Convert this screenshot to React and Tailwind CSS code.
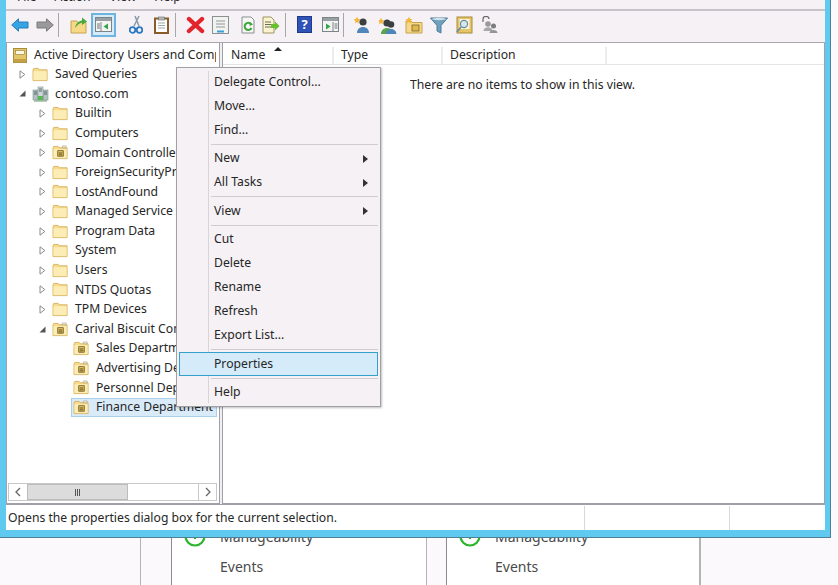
import React from "react";

const Folder = ({ ou, w = 18 }) => (
  <svg width={w} height={w - 2} viewBox="0 0 18 16" className="shrink-0">
    <path d="M1 3.5 L1.8 1.5 H6.5 L7.5 3 H16 V14.5 H1 Z" fill="#f7dc8e" stroke="#d9b25e" />
    <rect x="1.5" y="4.5" width="14" height="9.5" fill="#fcecb6" />
    {ou && <path d="M6 6 H12 V12 H6 Z" fill="#e9c767" stroke="#7d6a2c" />}
    {ou && <path d="M7 8.5 H11 M7 10.5 H11" stroke="#5a4a16" strokeWidth="1" />}
    {ou && <path d="M11 1 H15 V3 H11 Z" fill="#f4f1e6" stroke="#a89a6a" strokeWidth=".6" />}
  </svg>
);

const Collapsed = () => (
  <svg width="7" height="9" viewBox="0 0 7 9" className="shrink-0">
    <path d="M1 .8 L5.8 4.5 L1 8.2 Z" fill="#fff" stroke="#8a8a8a" />
  </svg>
);
const Expanded = () => (
  <svg width="7" height="7" viewBox="0 0 7 7" className="shrink-0">
    <path d="M6.5 .5 V6.5 H.5 Z" fill="#555" />
  </svg>
);
const Domain = () => (
  <svg width="17" height="16" viewBox="0 0 17 16" className="shrink-0">
    <rect x="1" y="4" width="5" height="10" fill="#b3c0c0" stroke="#7f8f8f" strokeWidth=".6" />
    <rect x="11" y="4" width="5" height="10" fill="#b3c0c0" stroke="#7f8f8f" strokeWidth=".6" />
    <rect x="6" y="1" width="5" height="13" fill="#cfd9d9" stroke="#7f8f8f" strokeWidth=".6" />
    <path d="M7 3 H10 M7 5 H10 M2 6 H5 M12 6 H15 M2 8 H5 M12 8 H15" stroke="#54666a" />
    <rect x="6" y="10" width="5" height="4" fill="#58b558" />
    <path d="M2 15 H15" stroke="#6a9a6a" />
  </svg>
);
const Snapin = () => (
  <svg width="14" height="15" viewBox="0 0 14 15" className="shrink-0">
    <rect x=".5" y=".5" width="13" height="14" fill="#e4c568" stroke="#a98b3a" />
    <rect x="2.5" y="2.5" width="9" height="4" fill="#fbf6dc" stroke="#8a7a42" strokeWidth=".6" />
    <rect x=".5" y="11" width="13" height="3.5" fill="#c39f47" />
  </svg>
);

const Arrow = ({ dir, color, stroke }) => (
  <svg width="18" height="14" viewBox="0 0 18 14" className="shrink-0">
    <path
      d={dir === "l" ? "M.7 7 L7.5 .8 V4 H17 V10 H7.5 V13.2 Z" : "M17.3 7 L10.5 .8 V4 H1 V10 H10.5 V13.2 Z"}
      fill={color}
      stroke={stroke}
    />
  </svg>
);

const Sep = ({ cls }) => <div className={`w-px h-[24px] bg-[#a6a6ac] shrink-0 ${cls}`} />;

const Doc = ({ children, fill = "#f6f6f2", stroke = "#8a8f93" }) => (
  <svg width="18" height="18" viewBox="0 0 18 18" className="shrink-0">
    <path d="M3 1 H12 L15 4 V17 H3 Z" fill={fill} stroke={stroke} />
    {children}
  </svg>
);

const Person = ({ x = 0, c = "#4f85b8", star }) => (
  <g transform={`translate(${x} 0)`}>
    <circle cx="10" cy="6" r="3.6" fill="#3b3f42" />
    <path d="M4 17 C4 9 16 9 16 17 Z" fill={c} />
    {star && <path d="M4 .5 L5 3 L7.5 3.5 L5.5 5 L6 7.5 L4 6 L2 7.5 L2.5 5 L.5 3.5 L3 3 Z" fill="#f2b431" />}
  </g>
);

const Toolbar = () => (
  <div className="h-[27px] pb-[4px] flex items-center bg-[#f5f1f5] border-b border-[#a8a8ae] box-content">
    <div className="ml-[5px]"><Arrow dir="l" color="#35a4e4" stroke="#2a7fb8" /></div>
    <div className="ml-[7px]"><Arrow dir="r" color="#9a9a9a" stroke="#7a7a7a" /></div>
    <Sep cls="ml-[4px]" />
    <div className="ml-[11px]">
      <svg width="18" height="18" viewBox="0 0 18 18" className="shrink-0">
        <path d="M1 5 H7 L8 6.5 H16 V17 H1 Z" fill="#f5d987" stroke="#c9a24d" />
        <path d="M5 12 C6 7 9 5 12 4.5 V1.5 L17 5.5 L12 9 V6.5 C10 7 7 9 5 12 Z" fill="#48a93f" />
      </svg>
    </div>
    <div className="ml-[3px] w-[25px] h-[24px] flex items-center justify-center bg-[#d5ebf9] border-2 border-[#6fb4de]">
      <svg width="17" height="15" viewBox="0 0 17 15">
        <rect x=".5" y=".5" width="16" height="14" fill="#f4f4f2" stroke="#7c8488" />
        <rect x="1" y="1" width="15" height="3" fill="#98a0a6" />
        <path d="M6 5 V14" stroke="#7c8488" />
        <path d="M2 7 H5 M2 9 H5 M2 11 H5" stroke="#6c7478" />
        <path d="M13 6.5 V12.5 L8.5 9.5 Z" fill="#30a54a" />
      </svg>
    </div>
    <div className="ml-[13px]">
      <svg width="14" height="20" viewBox="0 0 14 20" className="shrink-0">
        <path d="M10 1 L5 11 M6 1 L10 11" stroke="#8a9aa8" strokeWidth="1.5" />
        <circle cx="3.5" cy="15" r="2.8" fill="none" stroke="#2b78c4" strokeWidth="1.8" />
        <circle cx="10.5" cy="15" r="2.8" fill="none" stroke="#2b78c4" strokeWidth="1.8" />
      </svg>
    </div>
    <div className="ml-[11px]">
      <svg width="15" height="18" viewBox="0 0 15 18" className="shrink-0">
        <rect x="1" y="2.5" width="13" height="14.5" fill="#fff" stroke="#8a5c2a" strokeWidth="2" />
        <rect x="4.5" y="1" width="6" height="3" fill="#b5bcc0" stroke="#6a6a6a" strokeWidth=".6" />
        <path d="M4 7 H11 M4 9.5 H11 M4 12 H11" stroke="#9aa" />
      </svg>
    </div>
    <Sep cls="ml-[6px]" />
    <div className="ml-[10px]">
      <svg width="19" height="18" viewBox="0 0 19 18" className="shrink-0">
        <path d="M3 3 L16 15 M16 3 L3 15" stroke="#e2252b" strokeWidth="4.4" strokeLinecap="round" />
      </svg>
    </div>
    <div className="ml-[7px]">
      <svg width="17" height="18" viewBox="0 0 17 18" className="shrink-0">
        <rect x=".5" y=".5" width="16" height="17" fill="#f2f2ee" stroke="#8a9094" />
        <path d="M4 5 H13 M4 8 H13 M4 11 H13" stroke="#8d979c" strokeWidth="1.2" />
        <path d="M5 15.5 H12" stroke="#38a0d8" strokeWidth="2" />
      </svg>
    </div>
    <div className="ml-[10px]">
      <Doc>
        <path d="M12 8 A3.6 3.6 0 1 0 12.5 12" fill="none" stroke="#3aa63a" strokeWidth="2" />
        <path d="M11 6 L14 8.5 L10.5 10 Z" fill="#3aa63a" />
      </Doc>
    </div>
    <div className="ml-[5px]">
      <svg width="18" height="18" viewBox="0 0 18 18" className="shrink-0">
        <path d="M1 1 H9 L12 4 V17 H1 Z" fill="#fbf3cf" stroke="#9c9264" />
        <path d="M3 6 H9 M3 8.5 H9 M3 11 H9" stroke="#6a6a5a" />
        <path d="M9 8 H13 V5.5 L17.5 10 L13 14.5 V12 H9 Z" fill="#68c02f" />
      </svg>
    </div>
    <Sep cls="ml-[5px]" />
    <div className="ml-[11px]">
      <div className="w-[15px] h-[17px] bg-[#2f52b8] border border-[#1f3a88] flex items-center justify-center text-white text-[13px] leading-none font-bold font-['Liberation_Sans',sans-serif]">?</div>
    </div>
    <div className="ml-[10px]">
      <svg width="17" height="15" viewBox="0 0 17 15" className="shrink-0">
        <rect x=".5" y=".5" width="16" height="14" fill="#f4f4f2" stroke="#7c8488" />
        <rect x="1" y="1" width="15" height="3" fill="#98a0a6" />
        <path d="M11 5 V14" stroke="#7c8488" />
        <path d="M12.5 7 H15.5 M12.5 9 H15.5 M12.5 11 H15.5" stroke="#6c7478" />
        <path d="M4 6.5 V12.5 L8.5 9.5 Z" fill="#30a54a" />
      </svg>
    </div>
    <Sep cls="ml-[4px]" />
    <div className="ml-[9px]">
      <svg width="19" height="18" viewBox="0 0 19 18" className="shrink-0"><Person star /></svg>
    </div>
    <div className="ml-[7px]">
      <svg width="19" height="18" viewBox="0 0 19 18" className="shrink-0">
        <g transform="translate(-2 1)"><Person c="#58a848" star /></g>
        <g transform="translate(3 3) scale(.9)"><Person /></g>
      </svg>
    </div>
    <div className="ml-[7px]">
      <svg width="18" height="18" viewBox="0 0 18 18" className="shrink-0">
        <path d="M1 5 H6 L7 6.5 H17 V17 H1 Z" fill="#f5d987" stroke="#c9a24d" />
        <rect x="7" y="9" width="7" height="6" fill="#e0b84f" stroke="#6a5a20" strokeWidth=".7" />
        <path d="M4 .5 L5 3 L7.5 3.5 L5.5 5 L6 7.5 L4 6 L2 7.5 L2.5 5 L.5 3.5 L3 3 Z" fill="#f2b431" />
      </svg>
    </div>
    <div className="ml-[7px]">
      <svg width="18" height="18" viewBox="0 0 18 18" className="shrink-0">
        <path d="M.5 2 H17.5 L11 9.5 V17 L7 15 V9.5 Z" fill="#6fa0bd" stroke="#4d7c98" />
        <ellipse cx="9" cy="3" rx="7" ry="1.2" fill="#cfe2ec" />
      </svg>
    </div>
    <div className="ml-[8px]">
      <svg width="17" height="18" viewBox="0 0 17 18" className="shrink-0">
        <rect x="1" y="1" width="15" height="16" fill="#e4c568" stroke="#a98b3a" />
        <rect x="3.5" y="3" width="10" height="10" fill="#faf6e0" />
        <circle cx="8" cy="8" r="3.6" fill="#d6e6ee" stroke="#6b8b9b" strokeWidth="1.2" />
        <path d="M5 11 L1 16" stroke="#6b8b9b" strokeWidth="1.8" />
      </svg>
    </div>
    <div className="ml-[8px]">
      <svg width="18" height="18" viewBox="0 0 18 18" className="shrink-0">
        <path d="M2 6 V3 A3 2.6 0 0 1 8 3" fill="none" stroke="#666" strokeWidth="1.2" />
        <circle cx="7" cy="8" r="2.8" fill="#9a9a9a" />
        <path d="M2.5 15 C2.5 10 11.5 10 11.5 15 Z" fill="#a8a8a8" />
        <circle cx="12.5" cy="10" r="2.5" fill="#7c7c7c" />
        <path d="M8.5 17 C8.5 13 16.5 13 16.5 17 Z" fill="#959595" />
      </svg>
    </div>
  </div>
);

const TreeRow = ({ pl, exp, col, icon, label, selected }) => (
  <div className={`h-[19.6px] flex items-center whitespace-nowrap ${pl}`}>
    {exp && <span className="w-[7px] flex justify-center"><Expanded /></span>}
    {col && <span className="w-[7px] flex justify-center"><Collapsed /></span>}
    {selected ? (
      <span className="flex items-center h-[19px] w-[146px] pl-[1px] gap-[6px] bg-[#d9ebf9] border border-[#a9cfe9] overflow-hidden">
        {icon}<span>{label}</span>
      </span>
    ) : (
      <span className={`flex items-center ${col || exp ? "ml-[6px]" : "ml-[2px]"} gap-[6px]`}>{icon}<span>{label}</span></span>
    )}
  </div>
);

const Tree = () => {
  const l1 = [
    ["Builtin"], ["Computers"], ["Domain Controllers", true], ["ForeignSecurityPrincipals"], ["LostAndFound"],
    ["Managed Service Accounts"], ["Program Data"], ["System"], ["Users"], ["NTDS Quotas"], ["TPM Devices"],
  ];
  return (
    <div className="flex-1 min-h-0 overflow-hidden bg-white pt-[3px]">
      <div className="h-[18.5px] w-[208px] overflow-hidden flex items-center pl-[5px] gap-[7px] whitespace-nowrap"><Snapin /><span>Active Directory Users and Computers</span></div>
      <TreeRow pl="pl-[11px]" col icon={<Folder w={17} />} label="Saved Queries" />
      <TreeRow pl="pl-[11px]" exp icon={<Domain />} label="contoso.com" />
      {l1.map(([t, ou]) => (
        <TreeRow key={t} pl="pl-[31px]" col icon={<Folder w={17} ou={ou} />} label={t} />
      ))}
      <TreeRow pl="pl-[31px]" exp icon={<Folder w={17} ou />} label="Carival Biscuit Company" />
      <TreeRow pl="pl-[63px]" icon={<Folder w={17} ou />} label="Sales Department" />
      <TreeRow pl="pl-[63px]" icon={<Folder w={17} ou />} label="Advertising Department" />
      <TreeRow pl="pl-[63px]" icon={<Folder w={17} ou />} label="Personnel Department" />
      <TreeRow pl="pl-[63px]" selected icon={<Folder w={17} ou />} label="Finance Department" />
    </div>
  );
};

const ScrollBtn = ({ d }) => (
  <div className="w-[17px] h-full flex items-center justify-center bg-white">
    <svg width="8" height="10" viewBox="0 0 8 10"><path d={d} fill="none" stroke="#666" strokeWidth="1.3" /></svg>
  </div>
);

const Scrollbar = () => (
  <div className="h-[18px] flex border border-[#c8c8c8] mr-[2px] mb-[2px] bg-white">
    <ScrollBtn d="M6 1 L2 5 L6 9" />
    <div className="w-[101px] h-full ml-px bg-[#dcdcdc] border border-[#bcbcbc] flex items-center justify-center gap-px">
      <span className="w-px h-[7px] bg-[#555]" /><span className="w-px h-[7px] bg-[#555]" /><span className="w-px h-[7px] bg-[#555]" />
    </div>
    <div className="flex-1" />
    <div className="border-l border-[#c8c8c8] h-full"><ScrollBtn d="M2 1 L6 5 L2 9" /></div>
  </div>
);

const Item = ({ label, sub, hot }) => (
  <div className={`h-[24px] flex items-center justify-between pr-[10px] ${hot ? "bg-[#d5ebfa] border border-[#35a0cc] pl-[34px]" : "pl-[35px]"}`}>
    <span>{label}</span>
    {sub && <svg width="5" height="8" viewBox="0 0 5 8"><path d="M0 0 L5 4 L0 8 Z" fill="#333" /></svg>}
  </div>
);

const MenuSep = () => <div className="h-[4.5px] flex items-center pl-[32px]"><div className="h-px w-full bg-[#d0ccd0]" /></div>;

const Menu = () => (
  <div className="absolute left-[176px] top-[67px] w-[205px] h-[340px] bg-[#f5f1f5] border border-[#a0a0a0] shadow-[1px_1px_2px_rgba(0,0,0,0.25)] p-[2px] z-10">
    <div className="absolute left-[31px] top-[3px] bottom-[3px] w-px bg-[#d8d4d8]" />
    <div className="relative">
      <Item label="Delegate Control..." />
      <Item label="Move..." />
      <Item label="Find..." />
      <MenuSep />
      <Item label="New" sub />
      <Item label="All Tasks" sub />
      <MenuSep />
      <Item label="View" sub />
      <MenuSep />
      <Item label="Cut" />
      <Item label="Delete" />
      <Item label="Rename" />
      <Item label="Refresh" />
      <Item label="Export List..." />
      <MenuSep />
      <Item label="Properties" hot />
      <MenuSep />
      <Item label="Help" />
    </div>
  </div>
);

const Health = () => (
  <div className="flex items-center h-[24px] pl-[12px] gap-[14px]">
    <svg width="22" height="22" viewBox="0 0 22 22" className="shrink-0">
      <circle cx="11" cy="11" r="9.5" fill="#fff" stroke="#2cb52c" strokeWidth="2.2" />
      <path d="M11 5 V14" stroke="#2cb52c" strokeWidth="2.2" />
    </svg>
    <span>Manageability</span>
  </div>
);

const BackCard = ({ cls }) => (
  <div className={`h-full pt-[524px] bg-white text-[14px] text-[#4a4a4a] ${cls}`}>
    <Health />
    <div className="mt-[6px] h-[24px] flex items-center pl-[48px]">Events</div>
  </div>
);

export default function App() {
  return (
    <div className="relative w-[838px] h-[585px] overflow-hidden bg-[#fcf9fc] font-['Noto_Sans',sans-serif] text-[12.2px] text-[#262626]">
      <div className="flex h-full">
        <div className="w-[140px] shrink-0" />
        <div className="w-[31px] shrink-0 border-l border-[#b4b4b4]" />
        <BackCard cls="w-[255px] shrink-0 border-l border-[#8c8c8c]" />
        <div className="w-[20px] shrink-0 border-l border-[#b4b4b4]" />
        <BackCard cls="w-[255px] shrink-0 border-l border-[#8c8c8c] border-r-2 border-r-[#b4b4b4]" />
      </div>

      <div className="absolute left-0 top-0 w-[831px] h-[538px] bg-[#5fc9ef] pl-[6px] pr-[5px] pb-[7px] border-r border-b border-[#4d7f96] flex flex-col">
        <div className="h-[9px] shrink-0 overflow-hidden bg-[#f5f1f5] flex items-end pb-[3px]">
          <span className="ml-[11px]">File</span>
          <span className="ml-[18px]">Action</span>
          <span className="ml-[19px]">View</span>
          <span className="ml-[18px]">Help</span>
        </div>
        <div className="h-[2px] shrink-0 bg-[#c6c4c8]" />
        <Toolbar />
        <div className="flex-1 min-h-0 flex bg-[#f0eef0]">
          <div className="w-[214px] shrink-0 flex flex-col border border-t-0 border-[#a0a0a8] pl-px bg-white">
            <Tree />
            <Scrollbar />
          </div>
          <div className="flex-1 ml-[2px] flex flex-col bg-white border border-t-0 border-[#a0a0a8]">
            <div className="h-[22px] pt-[4px] flex items-center border-b border-[#e4e4e4]">
              <div className="w-[111px] h-full flex items-center pl-[8px] border-r-2 border-[#ececec] relative">
                Name
                <svg width="8" height="4" viewBox="0 0 8 4" className="absolute left-[51px] top-[0px]"><path d="M0 4 L4 0 L8 4 Z" fill="#222" /></svg>
              </div>
              <div className="w-[109px] h-full flex items-center pl-[7px] border-r-2 border-[#ececec]">Type</div>
              <div className="w-[164px] h-full flex items-center pl-[7px] border-r-2 border-[#ececec]">Description</div>
            </div>
            <div className="pl-[187px] pt-[11px]">There are no items to show in this view.</div>
          </div>
        </div>
        <div className="h-[26px] pt-[1px] shrink-0 flex items-center bg-white border-t border-[#a0a0a8] box-border">
          <div className="w-[579px] h-full flex items-center pl-[2px] border-r border-[#d8d8d8]">Opens the properties dialog box for the current selection.</div>
          <div className="w-[145px] h-full border-r border-[#d8d8d8]" />
          <div className="flex-1" />
        </div>
      </div>

      <Menu />
    </div>
  );
}
